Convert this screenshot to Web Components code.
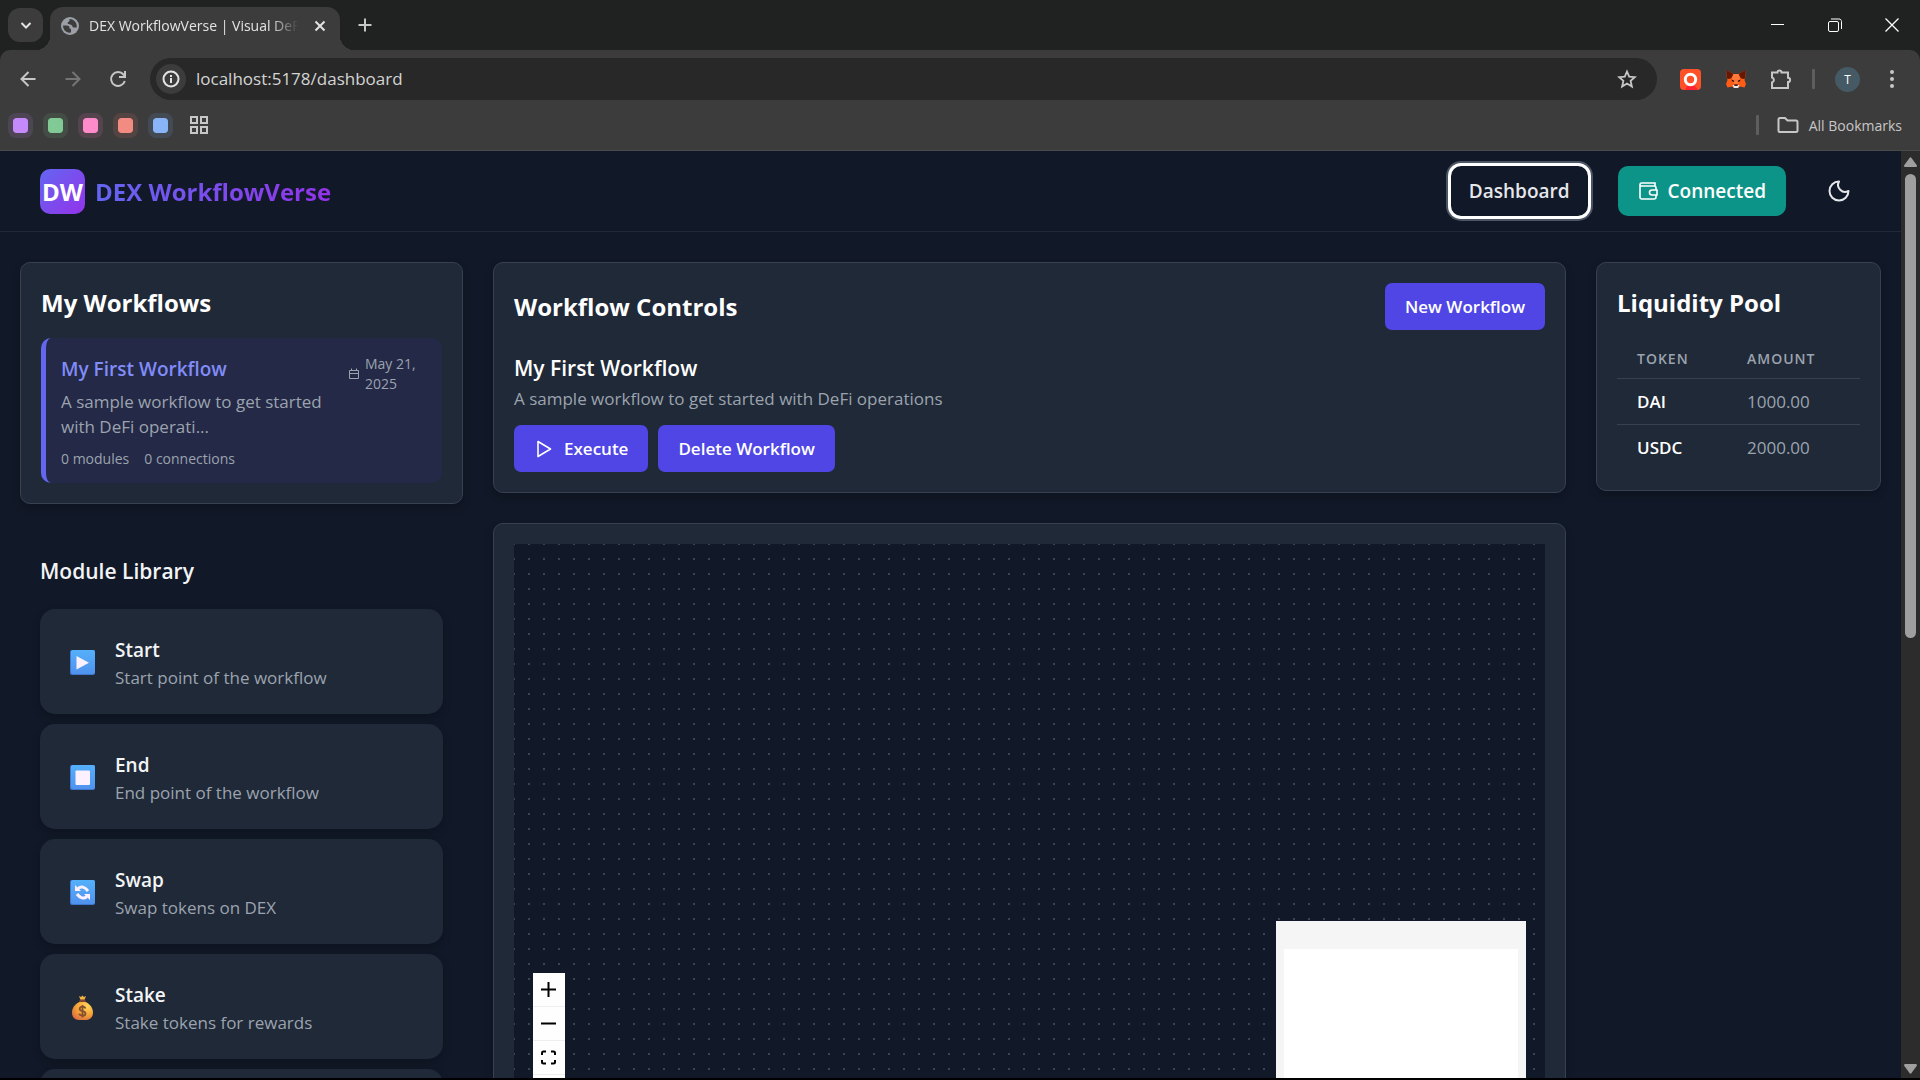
<!DOCTYPE html>
<html lang="en">
<head>
<meta charset="utf-8">
<title>DEX WorkflowVerse | Visual DeFi</title>
<style>
  body {
    margin: 0;
    height: 100vh;
    box-sizing: border-box;
    border-bottom: 2px solid #000;
    display: flex;
    flex-direction: column;
    overflow: hidden;
    background: #111827;
    color: #fff;
    font-family: "Open Sans", "Noto Sans", sans-serif;
  }

  .viewport {
    flex: 1;
    min-height: 0;
    display: flex;
  }

  .page {
    flex: 1;
    min-width: 0;
    overflow: hidden;
  }

  main {
    display: grid;
    grid-template-columns: minmax(0, 443fr) minmax(0, 1073fr) minmax(0, 285fr);
    gap: 30px;
    padding: 30px 20px;
    align-items: start;
  }

  .column {
    display: grid;
    gap: 30px;
  }
</style>
</head>
<body>
<browser-tabs></browser-tabs>
<browser-toolbar></browser-toolbar>
<bookmarks-bar></bookmarks-bar>
<div class="viewport">
  <div class="page">
    <dash-header></dash-header>
    <main>
      <div class="column">
        <dash-card heading="My Workflows">
          <workflow-item>
            <span slot="name">My First Workflow</span>
            <span slot="date">May 21, 2025</span>
            A sample workflow to get started with DeFi operati...
            <span slot="modules">0 modules</span>
            <span slot="connections">0 connections</span>
          </workflow-item>
        </dash-card>
        <module-library>
          <module-card icon="start"><span slot="name">Start</span>Start point of the workflow</module-card>
          <module-card icon="end"><span slot="name">End</span>End point of the workflow</module-card>
          <module-card icon="swap"><span slot="name">Swap</span>Swap tokens on DEX</module-card>
          <module-card icon="stake"><span slot="name">Stake</span>Stake tokens for rewards</module-card>
          <module-card></module-card>
        </module-library>
      </div>
      <div class="column">
        <workflow-controls>
          <span slot="name">My First Workflow</span>
          A sample workflow to get started with DeFi operations
        </workflow-controls>
        <dash-card>
          <flow-canvas></flow-canvas>
        </dash-card>
      </div>
      <dash-card heading="Liquidity Pool">
        <token-table></token-table>
      </dash-card>
    </main>
  </div>
  <page-scrollbar></page-scrollbar>
</div>

<script>
/**
 * Registers a custom element whose shadow root is cloned from a template.
 *
 * @param {string} name - The tag name.
 * @param {string} html - Markup and styles of the shadow root.
 * @param {Function} setup - Optional, called with the host and its root.
 */
function define (name, html, setup) {
  const template = document.createElement('template')
  template.innerHTML = html

  customElements.define(name,
    class extends HTMLElement {
      constructor () {
        super()
        this.attachShadow({ mode: 'open' })
          .appendChild(template.content.cloneNode(true))
      }

      connectedCallback () {
        if (setup) {
          setup(this, this.shadowRoot)
        }
      }
    }
  )
}

/*
 * Browser window: tabs.
 */
define('browser-tabs', `
  <style>
    :host {
      display: flex;
      height: 43px;
      padding: 7px 0 0 8px;
      background: #202221;
      color: #e3e3e3;
    }
    button {
      display: grid;
      place-items: center;
      padding: 0;
      border: 0;
      background: none;
      color: inherit;
    }
    .search {
      width: 35px;
      height: 34px;
      margin: 1px 7px 0 0;
      border-radius: 12px;
      background: #3c3c3c;
    }
    .tab {
      position: relative;
      display: flex;
      align-items: center;
      box-sizing: border-box;
      width: 290px;
      padding: 0 10px 6px 11px;
      border-radius: 13px 13px 0 0;
      background: #3c3c3c;
    }
    .tab::before, .tab::after {
      content: "";
      position: absolute;
      bottom: 0;
      width: 14px;
      height: 14px;
    }
    .tab::before {
      right: 100%;
      background: radial-gradient(circle at 0 0, transparent 14px, #3c3c3c 14px);
    }
    .tab::after {
      left: 100%;
      background: radial-gradient(circle at 100% 0, transparent 14px, #3c3c3c 14px);
    }
    .title {
      flex: 1;
      min-width: 0;
      margin: 0 5px 0 10px;
      white-space: nowrap;
      font-size: 14px;
      line-height: 20px;
      -webkit-mask-image: linear-gradient(90deg, #000 84%, transparent 97%);
      mask-image: linear-gradient(90deg, #000 84%, transparent 97%);
    }
    .close { width: 20px; height: 20px; }
    .add { width: 34px; height: 36px; margin-left: 8px; }
    .window { display: flex; margin-left: auto; }
    .window button { width: 57px; height: 36px; color: #fff; }
  </style>
  <button class="search" aria-label="Search tabs">
    <svg width="12" height="12" fill="none" stroke="currentColor" stroke-width="2"><path d="M1.500 4l4.500 4.500L10.500 4"/></svg>
  </button>
  <div class="tab">
    <svg width="18" height="18" viewBox="0 0 18 18">
      <circle cx="9" cy="9" r="9" fill="#9aa0a6"/>
      <path d="M2 8.500h3.500c2 0 3 .8 3 2.300v1h1.500v3.700c-4 .8-8-2-8-7zM8.500 2v1.500c0 .9-.8 1.500-1.700 1.500v2c1 .8 3.200.3 4.200 1.500.8 1 .4 2 1.500 2h3.300c.5-4-2.300-8.300-7.300-8.500z" fill="#3c3c3c"/>
    </svg>
    <div class="title">DEX WorkflowVerse | Visual DeF</div>
    <button class="close" aria-label="Close tab">
      <svg width="12" height="12" stroke="currentColor" stroke-width="2"><path d="M1.500 1.500l9 9M10.500 1.500l-9 9"/></svg>
    </button>
  </div>
  <button class="add" aria-label="New tab">
    <svg width="14" height="14" stroke="#c7c7c7" stroke-width="2"><path d="M7 0.500v13M.5 7h13"/></svg>
  </button>
  <div class="window">
    <button aria-label="Minimize"><svg width="14" height="14" stroke="currentColor"><path d="M0 6.500h13"/></svg></button>
    <button aria-label="Restore"><svg width="14" height="14" fill="none" stroke="currentColor"><rect x=".5" y="3.500" width="10" height="10" rx="1.500"/><path d="M3 1h8c1.500 0 2.500 1 2.500 2.500V11"/></svg></button>
    <button aria-label="Close"><svg width="14" height="14" stroke="currentColor" stroke-width="1.300"><path d="M.5 .5l13 13M13.500 .5l-13 13"/></svg></button>
  </div>
`)

/*
 * Browser window: navigation and address.
 */
define('browser-toolbar', `
  <style>
    :host {
      display: block;
      background: #202221;
      color: #c7c7c7;
    }
    .bar {
      display: flex;
      align-items: center;
      height: 58px;
      border-radius: 10px 10px 0 0;
      background: #3c3c3c;
    }
    button {
      display: grid;
      place-items: center;
      width: 45px;
      height: 40px;
      padding: 0;
      border: 0;
      background: none;
      color: inherit;
    }
    nav { display: flex; margin: 0 10px 0 5px; }
    .address {
      flex: 1;
      display: flex;
      align-items: center;
      height: 42px;
      padding: 0 6px;
      border-radius: 21px;
      background: #282828;
    }
    .address button { height: 30px; width: 30px; }
    .address .info { border-radius: 15px; background: #3c3c3c; color: #e3e3e3; }
    .address .star { width: 48px; }
    input {
      flex: 1;
      min-width: 0;
      height: 30px;
      margin: 0 0 0 10px;
      padding: 0;
      border: 0;
      background: none;
      color: #d4d4d4;
      font: 17px/30px "Open Sans", "Noto Sans", sans-serif;
    }
    .extensions { display: flex; align-items: center; margin: 0 6px 0 11px; }
    .line { width: 3px; height: 20px; margin: 0 9px; border-radius: 1px; background: #5e5e5e; }
    .avatar {
      width: 25px;
      height: 25px;
      margin: 0 9px 0 11px;
      border-radius: 50%;
      background: #455a64;
      color: #fff;
      font: 12px/25px "Open Sans", sans-serif;
    }
  </style>
  <div class="bar">
    <nav>
      <button aria-label="Back"><svg width="16" height="16" fill="none" stroke="currentColor" stroke-width="2"><path d="M15.500 8H2M8.500 1L1.500 8l7 7"/></svg></button>
      <button aria-label="Forward"><svg width="16" height="16" fill="none" stroke="#757575" stroke-width="2"><path d="M.5 8H14M7.500 1l7 7-7 7"/></svg></button>
      <button aria-label="Reload"><svg width="18" height="18" fill="none" stroke="currentColor" stroke-width="2"><path d="M15.800 11A7 7 0 1 1 14.500 4.500L16 6.500M16 1v6h-6"/></svg></button>
    </nav>
    <div class="address">
      <button class="info" aria-label="Site information"><svg width="18" height="18" fill="none" stroke="currentColor" stroke-width="2"><circle cx="9" cy="9" r="7.500"/><path d="M9 8v5M9 5v2"/></svg></button>
      <input aria-label="Address" value="localhost:5178/dashboard">
      <button class="star" aria-label="Bookmark"><svg width="20" height="20" fill="none" stroke="currentColor" stroke-width="1.800"><path d="M10 2.500l2.200 5.200 5.600.5-4.200 3.700 1.300 5.600-4.900-3-4.900 3 1.300-5.600-4.200-3.700 5.600-.5z"/></svg></button>
    </div>
    <div class="extensions">
      <button aria-label="Recorder"><svg width="21" height="21"><rect width="21" height="21" rx="4" fill="#ff5027"/><path d="M5 21l2-4h8l3 4z" fill="#ff2430"/><circle cx="10.500" cy="10.500" r="5.200" fill="none" stroke="#fff" stroke-width="3"/></svg></button>
      <button aria-label="Wallet"><svg width="20" height="20" viewBox="0 0 20 20">
        <path d="M1 1l6.500 4h5L19 1l.5 6-1 4 1.500 4-1.500 3.500L14 17.500 12 19H8l-2-1.500-4.500 1L0 15l1.500-4-1-4z" fill="#ff5c16"/>
        <path d="M1 1l6.500 4L5 9.500 1.500 10 .5 7zM19 1l-6.500 4L15 9.500l3.500.5 1-3z" fill="#661800"/>
        <path d="M7.500 5h5L14 10l-2.500 6h-3L6 10z" fill="#ff7a3a"/>
        <path d="M5.500 10.500l2.800 1.200-.3 1.300-2-.7zM14.500 10.500l-2.800 1.200.3 1.300 2-.7z" fill="#331000"/>
        <path d="M6.500 16h7L12 19H8z" fill="#e7ebf6"/>
        <path d="M8.300 15.300h3.400v1.600H8.300z" fill="#331000"/>
      </svg></button>
      <button aria-label="Extensions"><svg width="22" height="22" fill="none" stroke="currentColor" stroke-width="2"><path d="M2 4.500h5.500a2 2 0 0 1 4 0H18v5.300a2 2 0 0 1 0 4.200v6H2v-5.500a2.600 2.600 0 0 0 0-5z"/></svg></button>
      <span class="line"></span>
      <button class="avatar" aria-label="Profile">T</button>
      <button aria-label="Menu"><svg width="6" height="20" fill="currentColor"><circle cx="3" cy="3" r="2"/><circle cx="3" cy="10" r="2"/><circle cx="3" cy="17" r="2"/></svg></button>
    </div>
  </div>
`)

/*
 * Browser window: bookmarks.
 */
define('bookmarks-bar', `
  <style>
    :host {
      display: flex;
      align-items: center;
      height: 34px;
      padding: 0 18px 8px 8px;
      border-bottom: 1px solid #4a4a4a;
      background: #3c3c3c;
      color: #c7c7c7;
      font-size: 14px;
    }
    .group {
      width: 15px;
      height: 15px;
      margin-right: 10px;
      border: 5px solid color-mix(in srgb, var(--c) 14%, #393939);
      border-radius: 8px;
      background: var(--c);
      background-clip: padding-box;
    }
    .apps { margin-left: 6px; }
    a {
      display: flex;
      align-items: center;
      gap: 10px;
      color: inherit;
      text-decoration: none;
      white-space: nowrap;
    }
    .line { width: 3px; height: 20px; margin: 0 18px 0 auto; border-radius: 1px; background: #5e5e5e; }
  </style>
  <span class="group" style="--c: #c58af9"></span>
  <span class="group" style="--c: #81c995"></span>
  <span class="group" style="--c: #ff8bcb"></span>
  <span class="group" style="--c: #f28b82"></span>
  <span class="group" style="--c: #8ab4f8"></span>
  <svg class="apps" width="20" height="20" fill="none" stroke="currentColor" stroke-width="2"><path d="M2 2h6v6H2zM12 2h6v6h-6zM2 12h6v6H2zM12 12h6v6h-6z"/></svg>
  <span class="line"></span>
  <a href="#">
    <svg width="22" height="18" fill="none" stroke="currentColor" stroke-width="2"><path d="M1.500 3.500q0-1.500 1.500-1.500h5l2.500 2.500H19q1.500 0 1.500 1.500v9q0 1-1.500 1H3q-1.500 0-1.500-1z"/></svg>
    All Bookmarks
  </a>
`)

/*
 * Header of the app.
 */
define('dash-header', `
  <style>
    :host {
      display: flex;
      align-items: center;
      height: 80px;
      padding: 0 40px;
      border-bottom: 1px solid #1f2937;
    }
    .brand {
      display: flex;
      align-items: center;
      gap: 10px;
      margin-right: auto;
      color: #fff;
      font-size: 24px;
      font-weight: 700;
      line-height: 45px;
      text-decoration: none;
    }
    .mark {
      display: flex;
      justify-content: center;
      width: 45px;
      height: 45px;
      border-radius: 10px;
      background: linear-gradient(135deg, #6366f1, #9333ea);
    }
    .name {
      background: linear-gradient(90deg, #6366f1, #9333ea);
      -webkit-background-clip: text;
      background-clip: text;
      color: transparent;
    }
    nav { display: flex; align-items: center; gap: 30px; }
    button {
      display: flex;
      align-items: center;
      justify-content: center;
      gap: 10px;
      height: 50px;
      padding: 0 20px;
      border: 0;
      border-radius: 10px;
      background: none;
      color: #e5e7eb;
      font: 600 19px/30px "Open Sans", "Noto Sans", sans-serif;
    }
    .current { padding: 0 18px; box-shadow: 0 0 0 3px #fff, 0 0 0 5px #4b5563; }
    .wallet { background: #0d9488; color: #fff; }
    .theme { width: 45px; padding: 0; }
  </style>
  <a class="brand" href="#"><span class="mark">DW</span><span class="name">DEX WorkflowVerse</span></a>
  <nav>
    <button class="current">Dashboard</button>
    <button class="wallet">
      <svg width="20" height="20" fill="none" stroke="currentColor" stroke-width="1.600"><path d="M2 3v13q0 2 2 2h12q2 0 2-2v-2M18 9V7q0-2-2-2H3.500Q2 5 2 3.500T3.500 2H17v3M19 9h-5a2.500 2.500 0 0 0 0 5h5z"/></svg>
      Connected
    </button>
    <button class="theme" aria-label="Toggle theme">
      <svg width="24" height="24" viewBox="0 0 24 24" fill="none" stroke="currentColor" stroke-width="2" stroke-linejoin="round"><path d="M12 2.500a7 7 0 0 0 9.500 9.500A9.500 9.500 0 1 1 12 2.500z"/></svg>
    </button>
  </nav>
`)

/*
 * Bordered panel with an optional heading.
 */
define('dash-card', `
  <style>
    :host {
      display: block;
      padding: 20px;
      border: 1px solid #374151;
      border-radius: 10px;
      background: #1f2937;
      box-shadow: 0 4px 8px rgba(0, 0, 0, 0.2);
    }
    h2 { margin: 0 0 18px; padding-top: 2px; font-size: 24px; font-weight: 700; line-height: 35px; }
  </style>
  <h2></h2>
  <slot></slot>
`, (host, root) => {
  const heading = root.querySelector('h2')
  if (host.hasAttribute('heading')) {
    heading.textContent = host.getAttribute('heading')
  } else if (heading) {
    heading.remove()
  }
})

define('workflow-item', `
  <style>
    :host {
      display: flex;
      justify-content: space-between;
      padding: 16px 20px 14px 15px;
      border-left: 5px solid #6366f1;
      border-radius: 10px;
      background: #232946;
      color: #9ca3af;
    }
    .text { width: 270px; }
    h3 { margin: 0 0 5px; color: #818cf8; font-size: 19px; font-weight: 600; line-height: 30px; }
    p { margin: 0 0 10px; font-size: 17px; line-height: 25px; }
    .meta, .date { display: flex; font-size: 14px; line-height: 20px; }
    .meta { gap: 15px; }
    .date { align-items: center; align-self: flex-start; gap: 5px; width: 74px; }
    .date svg { flex: none; }
  </style>
  <div class="text">
    <h3><slot name="name"></slot></h3>
    <p><slot></slot></p>
    <div class="meta"><slot name="modules"></slot><slot name="connections"></slot></div>
  </div>
  <div class="date">
    <svg width="12" height="12" fill="none" stroke="currentColor"><path d="M1.500 2.500h9v8h-9zM1.500 5.500h9M3.500 .5v2M8.500 .5v2"/></svg>
    <slot name="date"></slot>
  </div>
`)

/*
 * Primary button, icon first when one is given.
 */
define('action-button', `
  <style>
    :host { display: block; }
    button {
      display: flex;
      align-items: center;
      gap: 10px;
      height: 47px;
      padding: 0 20px;
      border: 0;
      border-radius: 7px;
      background: #4f46e5;
      color: #fff;
      font: 600 17px/25px "Open Sans", "Noto Sans", sans-serif;
      white-space: nowrap;
    }
  </style>
  <button><slot name="icon"></slot><slot></slot></button>
`)

define('workflow-controls', `
  <style>
    :host { display: block; }
    header { display: flex; align-items: center; justify-content: space-between; margin-bottom: 20px; }
    h2 { margin: 0; font-size: 24px; font-weight: 700; line-height: 35px; }
    h3 { margin: 0; font-size: 21px; font-weight: 600; line-height: 36px; }
    p { margin: 0 0 14px; color: #9ca3af; font-size: 17px; line-height: 25px; }
    .actions { display: flex; gap: 10px; }
  </style>
  <dash-card>
    <header><h2>Workflow Controls</h2><action-button>New Workflow</action-button></header>
    <h3><slot name="name"></slot></h3>
    <p><slot></slot></p>
    <div class="actions">
      <action-button><svg slot="icon" width="20" height="20" fill="none" stroke="currentColor" stroke-width="1.600" stroke-linejoin="round"><path d="M4 2.500l12.500 7.500L4 17.500z"/></svg>Execute</action-button>
      <action-button>Delete Workflow</action-button>
    </div>
  </dash-card>
`)

define('module-library', `
  <style>
    :host { display: grid; gap: 10px; padding: 20px; }
    h2 { margin: 0 0 10px; color: #f3f4f6; font-size: 21px; font-weight: 600; line-height: 35px; }
  </style>
  <h2>Module Library</h2>
  <slot></slot>
`)

const TILE = `
  <defs><linearGradient id="g" x2="0" y2="1"><stop stop-color="#55b0fb"/><stop offset="1" stop-color="#5092ee"/></linearGradient></defs>
  <rect width="25" height="25" rx="2" fill="#3f76d0"/><rect x="1" width="24" height="24" rx="2" fill="url(#g)"/>`

const MODULE_ICONS = {
  start: TILE + '<path d="M6.500 6v13.500L19 12.700z" fill="#fdf1ff"/>',
  end: TILE + '<rect x="5.500" y="5.500" width="14.500" height="14.500" rx="1" fill="#fdf1ff"/>',
  swap: TILE + `<g fill="none" stroke="#fdf1ff" stroke-width="3"><path d="M8 8.500q5-4 10 2.500"/><path d="M17 16.500q-5 4-10-2.500"/></g>
    <path d="M5 5v6h6zM20 20v-6h-6z" fill="#fdf1ff"/>`,
  stake: `
    <defs><radialGradient id="b" cx=".7" cy=".25" r=".9"><stop stop-color="#ffd85c"/><stop offset=".5" stop-color="#f5a638"/><stop offset="1" stop-color="#d9663f"/></radialGradient></defs>
    <path d="M9 1l2 1 1.500-1.500L14 2l2-1-1.500 4h-4z" fill="#f3b340"/>
    <path d="M10 4.500h5L16.500 8h-8z" fill="#7d4533"/>
    <path d="M9.500 7h6c5 2 7.500 6.500 7.500 10.500 0 5-3.500 7.500-7 7.500H9c-4 0-7-2.500-7-7.500C2 13 5 9 9.500 7z" fill="url(#b)"/>
    <path d="M15.500 13.500q-.5-1.800-3-1.800t-2.800 2 2.800 2.500 3 2.500-3 2-3.200-2M12.500 10v12.500" fill="none" stroke="#86502f" stroke-width="1.800"/>`
}

define('module-card', `
  <style>
    :host {
      display: flex;
      align-items: center;
      gap: 20px;
      box-sizing: border-box;
      height: 105px;
      padding: 2px 30px 0;
      border-radius: 15px;
      background: #1f2937;
      box-shadow: 0 4px 8px rgba(0, 0, 0, 0.2);
    }
    h3 { margin: 0; color: #f3f4f6; font-size: 19px; font-weight: 600; line-height: 30px; }
    p { margin: 0; color: #9ca3af; font-size: 17px; line-height: 25px; }
  </style>
  <svg width="25" height="25"></svg>
  <div><h3><slot name="name"></slot></h3><p><slot></slot></p></div>
`, (host, root) => {
  root.querySelector('svg').innerHTML = MODULE_ICONS[host.getAttribute('icon')] || ''
})

define('token-table', `
  <style>
    :host { display: block; }
    table { width: 100%; border-spacing: 0; text-align: left; table-layout: fixed; }
    th, td { height: 45px; padding: 0 0 0 20px; font-size: 17px; line-height: 25px; }
    thead th { height: 40px; color: #9ca3af; font-size: 14px; font-weight: 600; letter-spacing: 1px; }
    thead th, tr:not(:last-child) > * { border-bottom: 1px solid #374151; }
    th:first-child { width: 90px; }
    tbody th { font-weight: 600; }
    td { color: #9ca3af; }
  </style>
  <table>
    <thead><tr><th>TOKEN</th><th>AMOUNT</th></tr></thead>
    <tbody>
      <tr><th>DAI</th><td>1000.00</td></tr>
      <tr><th>USDC</th><td>2000.00</td></tr>
    </tbody>
  </table>
`)

/*
 * Dotted canvas, with its zoom buttons and minimap laid over it.
 */
define('flow-canvas', `
  <style>
    :host {
      display: block;
      position: relative;
      height: 584px;
      overflow: hidden;
      background: #111827;
    }
    .dots { display: block; width: 100%; height: 100%; }
    .zoom, .minimap { position: absolute; bottom: 19px; }
    .zoom { left: 19px; background: #fff; }
    button {
      display: flex;
      align-items: center;
      box-sizing: border-box;
      width: 32px;
      height: 34px;
      padding: 0 8px;
      border: 0;
      border-bottom: 1px solid #eee;
      background: #fefefe;
    }
    button:last-child { border: 0; }
    .minimap { right: 19px; width: 250px; height: 188px; background: #f5f5f5; }
    .minimap svg { display: block; }
  </style>
  <svg class="dots">
    <pattern id="p" x="-1" y="-1" width="15" height="15" patternUnits="userSpaceOnUse"><rect width="2" height="2" fill="#3c4451"/></pattern>
    <rect width="100%" height="100%" fill="url(#p)"/>
  </svg>
  <div class="zoom">
    <button aria-label="Zoom in"><svg width="15" height="15" stroke="#000" stroke-width="2"><path d="M7.500 0v15M0 7.500h15"/></svg></button>
    <button aria-label="Zoom out"><svg width="15" height="15" stroke="#000" stroke-width="2"><path d="M0 7.500h15"/></svg></button>
    <button aria-label="Fit view"><svg width="15" height="15" fill="none" stroke="#000" stroke-width="2"><path d="M1 5V3q0-1.500 1.500-1.500H5M10 1.500h2.500Q14 1.500 14 3v2M14 10v2q0 1.500-1.500 1.500H10M5 13.500H2.500Q1 13.500 1 12v-2"/></svg></button>
    <button aria-label="Lock"><svg width="15" height="15" fill="none" stroke="#000" stroke-width="2"><path d="M2 7h11v7H2zM4.500 7V4a3 3 0 0 1 6 0"/></svg></button>
  </div>
  <div class="minimap"><svg width="250" height="188"><rect x="8" y="28" width="234" height="132" fill="#fff"/></svg></div>
`)

define('page-scrollbar', `
  <style>
    :host {
      display: flex;
      flex-direction: column;
      align-items: center;
      justify-content: space-between;
      width: 19px;
      padding: 6px 0 4px;
      box-sizing: border-box;
      background: #2c2c2c;
    }
    .track { flex: 1; padding: 7px 0; }
    .thumb { width: 11px; height: 52.500%; border-radius: 6px; background: #9f9f9f; }
  </style>
  <svg width="13" height="10" fill="#9f9f9f"><path d="M5.500 1q1-1.500 2 0L13 8.500q0 1.500-1 1.500H1Q0 10 0 8.500z"/></svg>
  <div class="track"><div class="thumb"></div></div>
  <svg width="13" height="10" fill="#9f9f9f"><path d="M5.500 9q1 1.500 2 0L13 1.500Q13 0 12 0H1Q0 0 0 1.500z"/></svg>
`)
</script>
</body>
</html>
